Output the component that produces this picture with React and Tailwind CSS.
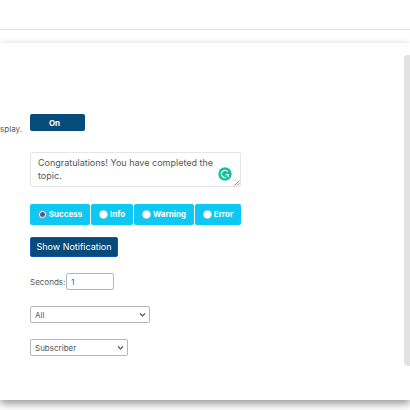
import React, { useState } from "react";

const types = [
  { id: "success", label: "Success", width: "w-[60px]" },
  { id: "info", label: "Info", width: "w-[42px]" },
  { id: "warning", label: "Warning", width: "w-[60px]" },
  { id: "error", label: "Error", width: "w-[46px]" },
];

const Dropdown = ({ label, options, width }) => (
  <div className={`relative h-[17px] ${width}`}>
    <select
      aria-label={label}
      className="block h-full w-full appearance-none rounded-xs border border-[#b4b6b9] bg-white pl-1 text-[8px] leading-none text-[#50575e]"
    >
      {options.map((option) => (
        <option key={option}>{option}</option>
      ))}
    </select>
    <svg
      className="pointer-events-none absolute top-[6px] right-[4px] h-[6px] w-[7px]"
      viewBox="0 0 7 6"
      fill="none"
      stroke="#50575e"
      strokeWidth="1.2"
    >
      <path d="M1 1.5 L3.5 4 L6 1.5" />
    </svg>
  </div>
);

const App = () => {
  const [enabled, setEnabled] = useState(true);
  const [message, setMessage] = useState("Congratulations! You have completed the topic.");
  const [type, setType] = useState("success");
  const [seconds, setSeconds] = useState("1");

  return (
    <div className="overflow-hidden bg-white pb-3 font-['Inter',sans-serif] text-[8px] text-[#50575e]">
      <header className="h-[30px] border-b border-[#dfdfdf]" />

      <main className="mt-[13px] flex items-start justify-between bg-white pt-3 pb-[34px] shadow-[0_4px_8px_rgba(0,0,0,0.38),0_0_8px_rgba(0,0,0,0.04)]">
        <div className="flex pt-[59px]">
          {/* Setting descriptions */}
          <div className="flex w-[30px] justify-end pt-[9px] pr-2">
            <p className="whitespace-nowrap leading-[12px]">splay.</p>
          </div>

          <form className="w-[211px]" onSubmit={(e) => e.preventDefault()}>
            <button
              type="button"
              aria-pressed={enabled}
              onClick={() => setEnabled(!enabled)}
              className="block h-[17px] w-[55px] rounded-xs bg-[#074b7a] pr-[6px] text-[8px] font-bold text-white"
            >
              {enabled ? "On" : "Off"}
            </button>

            <div className="relative mt-[21px]">
              <textarea
                aria-label="Message"
                value={message}
                onChange={(e) => setMessage(e.target.value)}
                className="block h-[35px] w-full resize-none overflow-hidden rounded-xs border border-[#e4e5e7] py-[3px] pr-6 pl-[7px] text-[9px] leading-[13px] text-[#50575e]"
              />
              <svg className="absolute top-[15px] right-[9px] h-[14px] w-[14px]" viewBox="0 0 14 14" fill="none">
                <circle cx="7" cy="7" r="6.7" fill="#15c39a" />
                <path d="M9.8 4.7 A3.6 3.6 0 1 0 8.2 10.4" stroke="#fff" strokeWidth="1.1" />
                <path d="M7.6 7.6 H10.3 V10" stroke="#fff" strokeWidth="1.1" />
              </svg>
              {/* Resize grip */}
              <svg
                className="pointer-events-none absolute right-[1px] bottom-[1px] h-[6px] w-[6px]"
                viewBox="0 0 6 6"
                fill="none"
                stroke="#6b6e72"
                strokeWidth="0.8"
              >
                <path d="M0.5 5.5 L5.5 0.5 M3.2 5.5 L5.5 3.2" />
              </svg>
            </div>

            <div className="mt-[17px] flex justify-between" role="radiogroup" aria-label="Notification type">
              {types.map((item) => (
                <label
                  key={item.id}
                  className={`flex h-[21px] items-center justify-center gap-[2px] rounded-xs bg-[#0dc8f2] pb-px text-[8px] font-bold text-white ${item.width}`}
                >
                  <input
                    type="radio"
                    name="type"
                    checked={type === item.id}
                    onChange={() => setType(item.id)}
                    className="h-[9px] w-[9px] shrink-0 appearance-none rounded-full border border-[#c3d3da] bg-white checked:border-[#6d8aa6] checked:bg-[radial-gradient(circle,#2f62a8_2px,#ffffff_3px)]"
                  />
                  {item.label}
                </label>
              ))}
            </div>

            <button
              type="submit"
              className="mt-3 block h-5 w-[88px] rounded-xs border border-[#0a58b8] bg-[#074b7a] text-[9px] whitespace-nowrap text-white"
            >
              Show Notification
            </button>

            <div className="mt-4 flex items-center gap-px">
              <label htmlFor="seconds">Seconds:</label>
              <input
                id="seconds"
                type="text"
                value={seconds}
                onChange={(e) => setSeconds(e.target.value)}
                className="h-[17px] w-12 rounded-xs border border-[#b4b6b9] pl-1 text-[8px]"
              />
            </div>

            <div className="mt-4 flex flex-col gap-4">
              <Dropdown label="Show on" options={["All", "Courses", "Lessons"]} width="w-[120px]" />
              <Dropdown label="Role" options={["Subscriber", "Editor", "Administrator"]} width="w-[98px]" />
            </div>
          </form>
        </div>

        <aside className="h-[311px] w-[6px] rounded-l-sm bg-[#e2e2e3]" />
      </main>
    </div>
  );
};

export default App;
